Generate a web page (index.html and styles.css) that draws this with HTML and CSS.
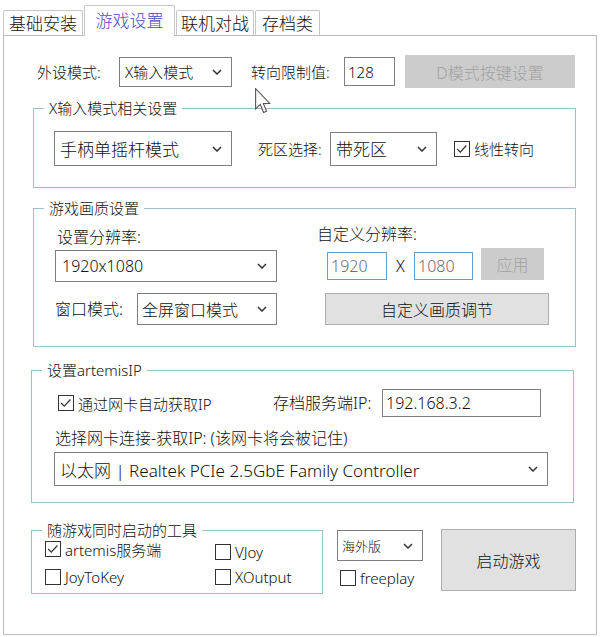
FILE: index.html
```html
<!DOCTYPE html>
<html lang="zh-CN">

<head>
    <meta charset="UTF-8">
    <title>游戏设置</title>
    <link rel="stylesheet" href="styles.css">
</head>

<body>
    <div class="window">
        <!-- Tab strip -->
        <div class="tabs">
            <div class="tab tab-basic">基础安装</div>
            <div class="tab tab-game active">游戏设置</div>
            <div class="tab tab-online">联机对战</div>
            <div class="tab tab-save">存档类</div>
        </div>

        <div class="page">
            <!-- Device mode row -->
            <div class="device-row">
                <span class="label device-label">外设模式:</span>
                <div class="combo device-combo">
                    <span>X输入模式</span>
                    <svg class="chevron" viewBox="0 0 10 6"><polyline points="1,1 5,5 9,1" /></svg>
                </div>
                <span class="label steer-label">转向限制值:</span>
                <div class="textbox steer-box">128</div>
                <button class="btn btn-off dmode-btn">D模式按键设置</button>
            </div>

            <!-- X input settings -->
            <fieldset class="group xinput-group">
                <legend>X输入模式相关设置</legend>
                <div class="xinput-body">
                    <div class="combo big stick-combo">
                        <span>手柄单摇杆模式</span>
                        <svg class="chevron" viewBox="0 0 10 6"><polyline points="1,1 5,5 9,1" /></svg>
                    </div>
                    <span class="label dead-label">死区选择:</span>
                    <div class="combo big dead-combo">
                        <span>带死区</span>
                        <svg class="chevron" viewBox="0 0 10 6"><polyline points="1,1 5,5 9,1" /></svg>
                    </div>
                    <label class="check linear-check">
                        <span class="box"><svg viewBox="0 0 16 16"><polyline points="2.5,8 6,11.5 13,4" /></svg></span>线性转向
                    </label>
                </div>
            </fieldset>

            <!-- Quality settings -->
            <fieldset class="group quality-group">
                <legend>游戏画质设置</legend>
                <div class="quality-body">
                    <div class="res-col">
                        <div class="label res-label">设置分辨率:</div>
                        <div class="combo res-combo">
                            <span>1920x1080</span>
                            <svg class="chevron" viewBox="0 0 10 6"><polyline points="1,1 5,5 9,1" /></svg>
                        </div>
                        <div class="window-row">
                            <span class="label window-label">窗口模式:</span>
                            <div class="combo window-combo">
                                <span>全屏窗口模式</span>
                                <svg class="chevron" viewBox="0 0 10 6"><polyline points="1,1 5,5 9,1" /></svg>
                            </div>
                        </div>
                    </div>
                    <div class="custom-col">
                        <div class="label custom-label">自定义分辨率:</div>
                        <div class="custom-row">
                            <div class="textbox res-box width-box">1920</div>
                            <span class="times">X</span>
                            <div class="textbox res-box height-box">1080</div>
                            <button class="btn btn-off apply-btn">应用</button>
                        </div>
                        <button class="btn quality-btn">自定义画质调节</button>
                    </div>
                </div>
            </fieldset>

            <!-- artemis IP -->
            <fieldset class="group ip-group">
                <legend>设置artemisIP</legend>
                <div class="ip-body">
                    <div class="ip-row">
                        <label class="check auto-check">
                            <span class="box"><svg viewBox="0 0 16 16"><polyline points="2.5,8 6,11.5 13,4" /></svg></span>通过网卡自动获取IP
                        </label>
                        <span class="label server-label">存档服务端IP:</span>
                        <div class="textbox server-box">192.168.3.2</div>
                    </div>
                    <div class="label nic-label">选择网卡连接-获取IP: (该网卡将会被记住)</div>
                    <div class="combo nic-combo">
                        <span>以太网 | Realtek PCIe 2.5GbE Family Controller</span>
                        <svg class="chevron" viewBox="0 0 10 6"><polyline points="1,1 5,5 9,1" /></svg>
                    </div>
                </div>
            </fieldset>

            <!-- Tools + launch -->
            <div class="launch-row">
                <fieldset class="group tools-group">
                    <legend>随游戏同时启动的工具</legend>
                    <div class="tools-body">
                        <label class="check">
                            <span class="box"><svg viewBox="0 0 16 16"><polyline points="2.5,8 6,11.5 13,4" /></svg></span>artemis服务端
                        </label>
                        <label class="check vjoy-check"><span class="box"></span>VJoy</label>
                        <label class="check"><span class="box"></span>JoyToKey</label>
                        <label class="check"><span class="box"></span>XOutput</label>
                    </div>
                </fieldset>
                <div class="launch-col">
                    <div class="combo region-combo">
                        <span>海外版</span>
                        <svg class="chevron" viewBox="0 0 10 6"><polyline points="1,1 5,5 9,1" /></svg>
                    </div>
                    <label class="check freeplay-check"><span class="box"></span>freeplay</label>
                </div>
                <button class="btn launch-btn">启动游戏</button>
            </div>
        </div>

        <!-- mouse pointer over the window -->
        <svg class="cursor" viewBox="0 0 13 21">
            <path d="M0.5 0.5 L0.5 17 L4.3 13.3 L7 19.8 L9.4 18.8 L6.8 12.5 L12 12.5 Z" />
        </svg>
    </div>
</body>

</html>
```

FILE: styles.css
```css
/* Base */
body {
    margin: 0;
    background-color: #ffffff;
    color: #111;
    font-family: "Noto Sans", "Noto Sans CJK SC", sans-serif;
    font-weight: 300;
}

.window {
    position: relative;
    width: 600px;
    height: 637px;
}

/* Tabs */
.tabs {
    display: flex;
    align-items: flex-end;
    height: 35px;
    padding-left: 3px;
}

.tab {
    box-sizing: border-box;
    height: 25px;
    border: 1px solid #c6c6c6;
    border-bottom: none;
    border-radius: 2px 2px 0 0;
    background-color: #fff;
    font-size: 17px;
    line-height: 25px;
    text-align: center;
}

.tab-basic {
    width: 80px;
    margin-right: 1px;
}

.tab-game {
    width: 91px;
}

.tab-online {
    width: 78px;
    margin-left: 1px;
}

.tab-save {
    width: 65px;
    margin-left: 1px;
}

.tab.active {
    position: relative;
    z-index: 1;
    height: 31px;
    margin-bottom: -1px;
    color: #4848c8;
    line-height: 30px;
}

/* Page */
.page {
    box-sizing: border-box;
    width: 594px;
    height: 600px;
    margin-left: 3px;
    border: 1px solid #bcbcbc;
}

.label {
    font-size: 15px;
    line-height: 18px;
    white-space: nowrap;
}

/* Combo boxes */
.combo {
    box-sizing: border-box;
    display: flex;
    align-items: center;
    justify-content: space-between;
    padding: 0 9px 0 5px;
    border: 1px solid #7f7f7f;
    background-color: #fff;
    font-size: 15px;
    white-space: nowrap;
}

.combo.big {
    font-size: 17px;
}

.chevron {
    flex-shrink: 0;
    width: 10px;
    height: 6px;
    fill: none;
    stroke: #333;
    stroke-width: 1.5;
}

/* Text boxes */
.textbox {
    box-sizing: border-box;
    display: flex;
    align-items: center;
    padding-left: 3px;
    border: 1px solid #7f7f7f;
    background-color: #fff;
    font-size: 15px;
}

/* Buttons */
.btn {
    box-sizing: border-box;
    padding: 0;
    border: 1px solid #adadad;
    background-color: #e1e1e1;
    color: #111;
    font-family: inherit;
    font-weight: 300;
    font-size: 16px;
}

.btn-off {
    border-color: #cccccc;
    background-color: #cccccc;
    color: #a2a2a2;
}

/* Check boxes */
.check {
    display: flex;
    align-items: center;
    height: 20px;
    font-size: 15px;
    white-space: nowrap;
}

.box {
    box-sizing: border-box;
    flex-shrink: 0;
    width: 16px;
    height: 16px;
    margin-right: 4px;
    border: 1px solid #333;
    background-color: #fff;
}

.box svg {
    display: block;
    width: 14px;
    height: 14px;
    fill: none;
    stroke: #333;
    stroke-width: 1.4;
}

/* Group boxes */
.group {
    min-width: 0;
    margin: 0;
    padding: 0;
    border: 1px solid #9dc0ce;
}

.group legend {
    margin-left: 10px;
    padding: 0 5px;
    font-size: 15px;
    line-height: 18px;
}

/* Device row */
.device-row {
    display: flex;
    align-items: center;
    height: 33px;
    margin: 19px 0 0 33px;
}

.device-label {
    width: 82px;
}

.device-combo {
    width: 113px;
    height: 30px;
}

.steer-label {
    width: 93px;
    margin-left: 19px;
}

.steer-box {
    width: 51px;
    height: 29px;
}

.dmode-btn {
    width: 170px;
    height: 33px;
    margin-left: 10px;
}

/* X input group */
.xinput-group {
    margin: 11px 20px 0 29px;
}

.xinput-body {
    display: flex;
    align-items: center;
    padding: 14px 0 21px 20px;
}

.stick-combo {
    width: 178px;
    height: 35px;
}

.dead-label {
    width: 72px;
    margin-left: 26px;
}

.dead-combo {
    width: 107px;
    height: 34px;
}

.linear-check {
    margin-left: 17px;
}

/* Quality group */
.quality-group {
    margin: 11px 20px 0 29px;
}

.quality-body {
    display: flex;
    padding: 11px 0 21px 21px;
}

.res-col {
    width: 222px;
}

.res-label {
    margin-left: 2px;
    font-size: 16px;
}

.res-combo {
    height: 32px;
    margin-top: 4px;
    padding-left: 6px;
    font-size: 16px;
}

.window-row {
    display: flex;
    align-items: center;
    margin-top: 11px;
}

.window-label {
    width: 82px;
    font-size: 16px;
}

.window-combo {
    width: 140px;
    height: 32px;
    padding-left: 4px;
    font-size: 16px;
}

.custom-col {
    margin-left: 40px;
}

.custom-label {
    margin-top: -3px;
    font-size: 16px;
}

.custom-row {
    display: flex;
    align-items: flex-end;
    margin-top: 5px;
}

.res-box {
    height: 28px;
    border-color: #5f9fd2;
    color: #6d6d6d;
    font-size: 16px;
}

.width-box {
    width: 60px;
    margin-left: 10px;
}

.height-box {
    width: 59px;
}

.times {
    width: 27px;
    height: 28px;
    font-size: 16px;
    line-height: 28px;
    text-align: center;
}

.apply-btn {
    width: 63px;
    height: 32px;
    margin-left: 8px;
}

.quality-btn {
    display: block;
    width: 224px;
    height: 32px;
    margin: 13px 0 0 8px;
}

/* IP group */
.ip-group {
    margin: 14px 22px 0 27px;
}

.ip-body {
    padding: 10px 0 16px 0;
}

.ip-row {
    display: flex;
    align-items: center;
    height: 28px;
}

.auto-check {
    width: 215px;
    margin-left: 26px;
}

.server-label {
    width: 109px;
    font-size: 16px;
}

.server-box {
    width: 159px;
    height: 28px;
    font-size: 16px;
}

.nic-label {
    margin: 12px 0 0 23px;
    font-size: 16px;
}

.nic-combo {
    width: 494px;
    height: 34px;
    margin: 5px 0 0 22px;
    font-size: 17px;
}

/* Tools + launch */
.launch-row {
    display: flex;
    align-items: flex-start;
    margin: 18px 0 0 27px;
}

.tools-group {
    width: 290px;
}

.tools-body {
    display: grid;
    grid-template-columns: 170px auto;
    row-gap: 5px;
    padding: 0 0 6px 13px;
}

.vjoy-check {
    margin-top: 3px;
}

.launch-col {
    width: 86px;
    margin-left: 14px;
}

.region-combo {
    height: 31px;
    margin-top: 9px;
    padding-left: 4px;
    font-size: 13px;
}

.freeplay-check {
    margin: 7px 0 0 3px;
}

.launch-btn {
    width: 135px;
    height: 62px;
    margin: 8px 0 0 18px;
}

/* Mouse pointer */
.cursor {
    position: absolute;
    left: 255px;
    top: 88px;
    width: 16px;
    height: 26px;
    fill: #fff;
    stroke: #555;
    stroke-width: 0.9;
}
```
